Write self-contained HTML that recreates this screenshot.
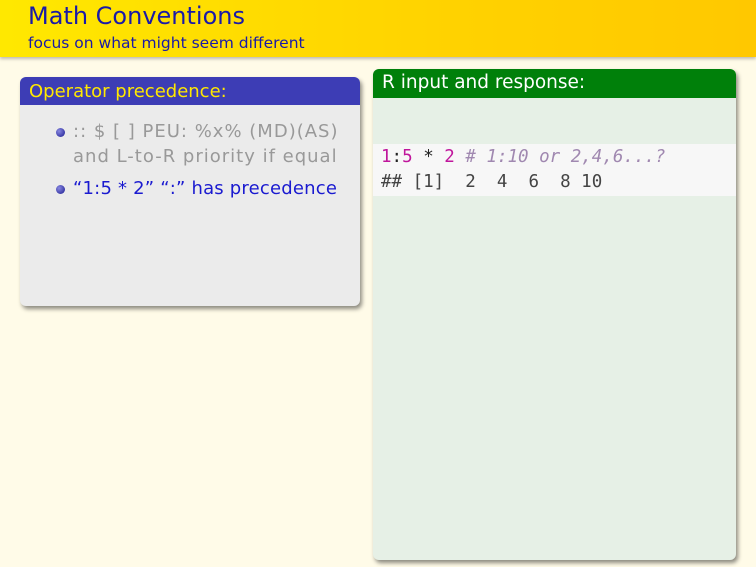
<!DOCTYPE html>
<html><head><style>
body{margin:0;width:756px;height:567px;background:#fffbe8;position:relative;overflow:hidden;font-family:"DejaVu Sans","Liberation Sans",sans-serif;}
.hd{position:absolute;left:0;top:0;width:756px;height:57px;background:linear-gradient(90deg,#ffe800,#ffd200 60%,#ffc800);box-shadow:0 2px 3px rgba(0,0,0,.25);}
.t1{position:absolute;left:28px;top:2px;font-size:24px;color:#1a1aa8;}
.t2{position:absolute;left:28px;top:34px;font-size:15.5px;color:#1a1aa8;}
.box{position:absolute;border-radius:6px;box-shadow:2px 3px 4px rgba(0,0,0,.45);overflow:hidden;}
.lb{left:20px;top:77px;width:340px;height:229px;background:#ebebeb;}
.lb .tt{height:28px;background:#3d3db5;color:#ffe800;font-size:18px;line-height:29px;padding-left:9px;}
.rb{left:373px;top:69px;width:363px;height:491px;background:#e6f0e6;}
.rb .tt{height:29px;background:#00800a;color:#fff;font-size:18.5px;line-height:28px;padding-left:9px;}
.li{position:absolute;left:53px;font-size:18px;letter-spacing:1px;line-height:25px;white-space:nowrap;}
.dot{position:absolute;left:-17px;top:9px;width:9px;height:9px;border-radius:50%;background:radial-gradient(circle at 35% 35%,#8888e0,#1a1a90);}
.code{position:absolute;left:0;top:75px;width:363px;height:52px;background:#f7f7f7;font-family:"DejaVu Sans Mono","Liberation Mono",monospace;font-size:17.5px;line-height:25px;padding:1px 0 0 8px;box-sizing:border-box;color:#444;white-space:pre;}
</style></head><body>
<div class="hd"><div class="t1">Math Conventions</div><div class="t2">focus on what might seem different</div></div>
<div class="box lb"><div class="tt">Operator precedence:</div>
<div class="li" style="top:42px;color:#999;"><span class="dot"></span>:: $ [ ] PEU: %x% (MD)(AS)<br>and L-to-R priority if equal</div>
<div class="li" style="top:99px;color:#1a1ad0;letter-spacing:0.2px;"><span class="dot"></span>“1:5 * 2” “:” has precedence</div>
</div>
<div class="box rb"><div class="tt">R input and response:</div>
<div class="code"><span style="color:#c0169c">1</span><span style="color:#222">:</span><span style="color:#c0169c">5</span> <span style="color:#222">*</span> <span style="color:#c0169c">2</span> <i style="color:#a088b0"># 1:10 or 2,4,6...?</i>
## [1]  2  4  6  8 10</div>
</div>
</body></html>
